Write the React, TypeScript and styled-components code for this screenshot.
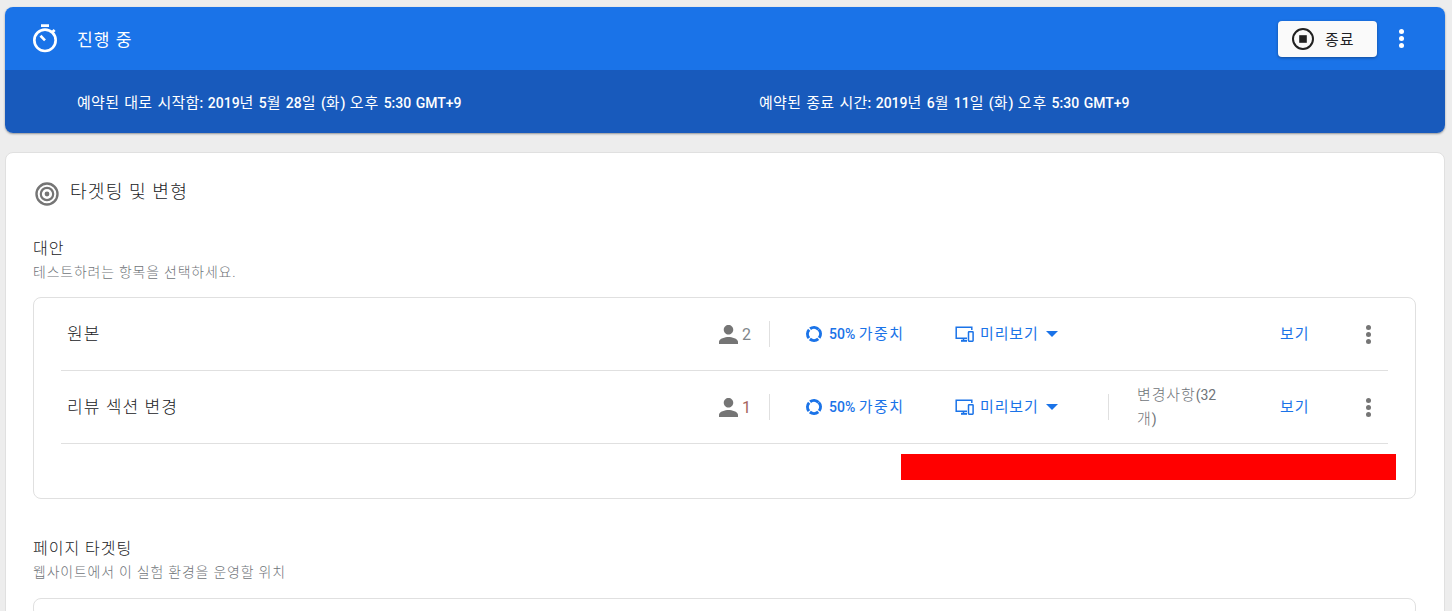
import styled, { createGlobalStyle } from "styled-components";

const GlobalStyle = createGlobalStyle`
  html, body {
    margin: 0;
    height: 100%;
    overflow: hidden;
    background: #ededed;
  }
  body {
    font-family: Roboto, "Noto Sans CJK KR", sans-serif;
    color: #202124;
  }
`;

// hangul in the reference runs wider than Noto, latin digits do not
const Ko = styled.span`
  font-size: 1.07em;
  font-weight: 300;
  letter-spacing: 0.06em;
`;

const Page = styled.div`
  padding: 7px 7px 0 5px;
  height: 611px;
  box-sizing: border-box;
  overflow: hidden;
`;

const StatusCard = styled.header`
  border-radius: 8px;
  overflow: hidden;
  box-shadow: 0 1px 2px rgba(60, 64, 67, 0.5);
  margin-bottom: 19px;
`;

const StatusTop = styled.div`
  height: 63px;
  background: #1a73e8;
  display: flex;
  align-items: center;
  padding: 0 24px;
  color: #fff;

  ${Ko} {
    font-weight: 400;
  }
`;

const StatusTitle = styled.div`
  flex: 1;
  margin-left: 16px;
  font-size: 16px;
`;

const EndButton = styled.button`
  width: 99px;
  height: 36px;
  background: #fafafa;
  border: 0;
  border-radius: 4px;
  box-shadow: 0 1px 3px rgba(0, 0, 0, 0.35);
  display: flex;
  align-items: center;
  gap: 10px;
  padding: 0 0 0 13px;
  font: 14px Roboto, "Noto Sans CJK KR", sans-serif;
  color: #202124;
`;

const KebabButton = styled.span<{ $color: string }>`
  display: flex;
  flex-direction: column;
  gap: 2px;
  width: 5px;
  color: ${(p) => p.$color};

  i {
    display: block;
    width: 5px;
    height: 5px;
    border-radius: 50%;
    background: currentColor;
  }
`;

const HeaderKebab = styled.div`
  margin-left: 22px;
  margin-right: 17px;
`;

const StatusBottom = styled.div`
  height: 63px;
  background: #185abc;
  color: #fff;
  display: flex;
  align-items: center;
  padding-left: 72px;
  font-size: 14px;
  font-weight: 500;

  ${Ko} {
    font-weight: 400;
  }
`;

const ScheduleItem = styled.div`
  width: 682px;
  word-spacing: 1px;
`;

const SchedulePrefix = styled(Ko)`
  letter-spacing: 0.02em;
`;

const MainCard = styled.section`
  background: #fff;
  border: 1px solid #e0e0e0;
  border-radius: 8px;
  padding: 0 28px 0 27px;
  height: 600px;
`;

const CardTitle = styled.h2`
  margin: 0;
  height: 74px;
  display: flex;
  align-items: center;
  gap: 10px;
  font-size: 17px;
  font-weight: 400;
  padding: 0 0 0 1px;

  svg {
    margin-top: 7px;
  }
`;

const SectionHead = styled.div`
  height: 60px;
`;

const SectionTitle = styled.div`
  font-size: 15px;
  line-height: 24px;
  margin-top: 10px;
`;

const SectionHint = styled.div`
  font-size: 13px;
  line-height: 20px;
  margin-top: 1px;
  color: #6f7479;
`;

const ListBox = styled.div`
  border: 1px solid #e0e0e0;
  border-radius: 8px;
  padding: 0 27px 18px;
`;

const Row = styled.div`
  height: 73px;
  box-sizing: border-box;
  border-bottom: 1px solid #e0e0e0;
  display: flex;
  align-items: center;
  padding-left: 6px;
  font-size: 14px;
`;

const RowName = styled.div`
  flex: 1;
  font-size: 16px;
  margin-bottom: 3px;
`;

const UserCount = styled.div<{ $alert?: boolean }>`
  width: 51px;
  height: 26px;
  box-sizing: border-box;
  border-right: 1px solid #e0e0e0;
  display: flex;
  align-items: center;
  gap: 4px;
  font-size: 16px;
  color: ${(p) => (p.$alert ? "#a5635c" : "#80868b")};
`;

const Weight = styled.div`
  width: 150px;
  margin-left: 35px;
  display: flex;
  align-items: center;
  gap: 6px;
  color: #1a73e8;

  span {
    margin-bottom: 3px;
  }
  b {
    font-weight: 500;
  }
  ${Ko} {
    font-weight: 400;
    letter-spacing: 0.1em;
  }
`;

const Preview = styled.div`
  width: 153px;
  display: flex;
  align-items: center;
  gap: 6px;
  color: #1a73e8;

  ${Ko} {
    font-weight: 400;
    margin-bottom: 3px;
  }
`;

const Caret = styled.span`
  margin-left: 1px;
  border-left: 6.5px solid transparent;
  border-right: 6.5px solid transparent;
  border-top: 6.5px solid #1a73e8;
`;

const ChangesCell = styled.div<{ $lined: boolean }>`
  width: 172px;
  height: 26px;
  box-sizing: border-box;
  display: flex;
  align-items: center;
  padding-left: 28px;
  border-left: 1px solid ${(p) => (p.$lined ? "#e0e0e0" : "transparent")};
`;

const ChangesText = styled.div`
  width: 90px;
  line-height: 24px;
  color: #6f7479;
  flex: none;
`;

const ViewLink = styled.a`
  width: 86px;
  margin-bottom: 3px;
  color: #1a73e8;

  ${Ko} {
    font-weight: 400;
  }
`;

const RowKebab = styled.div`
  width: 22px;
`;

const Redacted = styled.div`
  display: flex;
  justify-content: flex-end;
  margin: 10px -8px 0 0;

  div {
    width: 495px;
    height: 26px;
    background: #f00;
  }
`;

const PageSection = styled(SectionHead)`
  margin-top: 38px;
  height: 61px;
`;

const TimerIcon = () => (
  <svg width="32" height="32" viewBox="0 0 24 24" fill="none" stroke="#fff" strokeWidth="2">
    <path d="M9 2h6" />
    <circle cx="12" cy="13" r="8" />
    <path d="M12 13L8.6 9.6" />
    <path d="M17.6 6.8l1.6-1.6" />
  </svg>
);

const StopIcon = () => (
  <svg width="24" height="24" viewBox="0 0 24 24">
    <circle cx="12" cy="12" r="10" fill="none" stroke="#212121" strokeWidth="2" />
    <rect x="8.2" y="8.2" width="7.6" height="7.6" fill="#212121" />
  </svg>
);

const TargetIcon = () => (
  <svg width="26" height="26" viewBox="0 0 26 26" fill="none" stroke="#757575">
    <circle cx="13" cy="13" r="10.5" strokeWidth="2.4" />
    <circle cx="13" cy="13" r="6.2" strokeWidth="2.2" />
    <circle cx="13" cy="13" r="2.4" fill="#757575" stroke="none" />
  </svg>
);

const PersonIcon = () => (
  <svg width="19" height="19" viewBox="4 4 16 16" fill="#757575">
    <path d="M12 12c2.21 0 4-1.79 4-4s-1.79-4-4-4-4 1.79-4 4 1.79 4 4 4zm0 2c-2.67 0-8 1.34-8 4v2h16v-2c0-2.66-5.33-4-8-4z" />
  </svg>
);

const WeightIcon = () => (
  <svg width="18" height="18" viewBox="0 0 18 18" fill="none" stroke="#1a73e8" strokeWidth="3">
    <circle cx="9" cy="9" r="6.5" strokeDasharray="8.8 1.4" transform="rotate(-43 9 9)" />
  </svg>
);

const DevicesIcon = () => (
  <svg width="19" height="18" viewBox="0 0 19 18" fill="none" stroke="#1a73e8" strokeWidth="1.5">
    <path d="M12 13.2H1.2V2.2h15.6V5" />
    <path d="M6 15.8h6" strokeWidth="2" />
    <path d="M8.5 13.5v2" />
    <rect x="13.5" y="6.7" width="4.6" height="9.5" rx="0.6" />
  </svg>
);

const Dots = ({ color }: { color: string }) => (
  <KebabButton $color={color}>
    <i />
    <i />
    <i />
  </KebabButton>
);

type Variant = {
  name: string;
  users: number;
  changes?: boolean;
  alert?: boolean;
};

const variants: Variant[] = [
  { name: "원본", users: 2 },
  { name: "리뷰 섹션 변경", users: 1, changes: true, alert: true },
];

const VariantRow = ({ variant }: { variant: Variant }) => (
  <Row>
    <RowName>
      <Ko>{variant.name}</Ko>
    </RowName>
    <UserCount $alert={variant.alert}>
      <PersonIcon />
      {variant.users}
    </UserCount>
    <Weight>
      <WeightIcon />
      <span>
        <b>50%</b> <Ko>가중치</Ko>
      </span>
    </Weight>
    <Preview>
      <DevicesIcon />
      <Ko>미리보기</Ko>
      <Caret />
    </Preview>
    <ChangesCell $lined={!!variant.changes}>
      {variant.changes && (
        <ChangesText>
          <Ko>변경사항</Ko>(32<Ko>개</Ko>)
        </ChangesText>
      )}
    </ChangesCell>
    <ViewLink>
      <Ko>보기</Ko>
    </ViewLink>
    <RowKebab>
      <Dots color="#757575" />
    </RowKebab>
  </Row>
);

export default function App() {
  return (
    <Page>
      <GlobalStyle />
      <StatusCard>
        <StatusTop>
          <TimerIcon />
          <StatusTitle>
            <Ko>진행 중</Ko>
          </StatusTitle>
          <EndButton>
            <StopIcon />
            <Ko>종료</Ko>
          </EndButton>
          <HeaderKebab>
            <Dots color="#fff" />
          </HeaderKebab>
        </StatusTop>
        <StatusBottom>
          <ScheduleItem>
            <SchedulePrefix>예약된 대로 시작함</SchedulePrefix>: 2019<Ko>년</Ko> 5<Ko>월</Ko> 28<Ko>일</Ko> (<Ko>화</Ko>) <Ko>오후</Ko> 5:30 GMT+9
          </ScheduleItem>
          <ScheduleItem>
            <SchedulePrefix>예약된 종료 시간</SchedulePrefix>: 2019<Ko>년</Ko> 6<Ko>월</Ko> 11<Ko>일</Ko> (<Ko>화</Ko>) <Ko>오후</Ko> 5:30 GMT+9
          </ScheduleItem>
        </StatusBottom>
      </StatusCard>
      <MainCard>
        <CardTitle>
          <TargetIcon />
          <Ko>타겟팅 및 변형</Ko>
        </CardTitle>
        <SectionHead>
          <SectionTitle>
            <Ko>대안</Ko>
          </SectionTitle>
          <SectionHint>
            <Ko>테스트하려는 항목을 선택하세요.</Ko>
          </SectionHint>
        </SectionHead>
        <ListBox>
          {variants.map((variant) => (
            <VariantRow key={variant.name} variant={variant} />
          ))}
          <Redacted>
            <div />
          </Redacted>
        </ListBox>
        <PageSection>
          <SectionTitle>
            <Ko>페이지 타겟팅</Ko>
          </SectionTitle>
          <SectionHint>
            <Ko>웹사이트에서 이 실험 환경을 운영할 위치</Ko>
          </SectionHint>
        </PageSection>
        <ListBox />
      </MainCard>
    </Page>
  );
}
